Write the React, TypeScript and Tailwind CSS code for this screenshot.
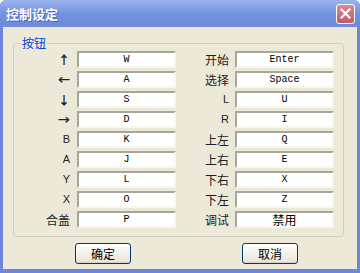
const rows: [string, string, string, string][] = [
  ["↑", "W", "开始", "Enter"],
  ["←", "A", "选择", "Space"],
  ["↓", "S", "L", "U"],
  ["→", "D", "R", "I"],
  ["B", "K", "上左", "Q"],
  ["A", "J", "上右", "E"],
  ["Y", "L", "下右", "X"],
  ["X", "O", "下左", "Z"],
  ["合盖", "P", "调试", "禁用"],
]

const cjk = "font-['SimSun','Noto_Sans_CJK_SC',sans-serif]"
const isCjk = (s: string) => /[\u4e00-\u9fff]/.test(s)
const isArrow = (s: string) => /[\u2190-\u2193]/.test(s)

function KeyBox({ value }: { value: string }) {
  return (
    <div
      className={`flex h-[17px] w-[99px] items-center justify-center border-2 border-t-[#a7a69c] border-l-[#a7a69c] border-r-[#f7f6f1] border-b-[#f7f6f1] bg-white text-black ${
        isCjk(value) ? `${cjk} text-[12px]` : "font-['Liberation_Mono',monospace] text-[10px]"
      }`}
    >
      {value}
    </div>
  )
}

function Label({ text, width }: { text: string; width: string }) {
  let font = `${cjk} text-[12px]`
  if (isArrow(text)) font = "font-['Noto_Sans_CJK_SC',sans-serif] text-[12px] font-bold"
  else if (!isCjk(text)) font = "font-['Liberation_Sans',sans-serif] text-[11px]"
  return (
    <div className={`${width} flex justify-end pr-[1px]`}>
      <span className={`${font} leading-none text-[#222]`}>{text}</span>
    </div>
  )
}

function XpButton({ children }: { children: React.ReactNode }) {
  return (
    <button
      className={`flex h-[21px] w-[56px] items-center justify-center rounded-[3px] border border-[#003c74] bg-gradient-to-b from-white to-[#e6e3d6] ${cjk} text-[12px] text-black shadow-[inset_0_-1px_0_#d6d0c5]`}
    >
      {children}
    </button>
  )
}

export default function App() {
  return (
    <div className="flex h-[273px] w-[360px] flex-col overflow-hidden rounded-t-[6px] bg-[#6d87dc]">
      {/* title bar */}
      <div className="flex h-[27px] items-center justify-between bg-gradient-to-b from-[#9ab3ee] via-[#7393de] to-[#6e8ad9] pl-[6px] pr-[5px]">
        <span
          className={`${cjk} text-[13px] font-bold text-white [text-shadow:1px_1px_0_#4a62b8]`}
        >
          控制设定
        </span>
        <div className="flex h-[20px] w-[19px] items-center justify-center rounded-[3px] border border-white bg-gradient-to-b from-[#d88a95] to-[#c05a6c]">
          <svg width="11" height="11" viewBox="0 0 11 11">
            <path d="M1.5 1.5 L9.5 9.5 M9.5 1.5 L1.5 9.5" stroke="white" strokeWidth="2.2" strokeLinecap="square" />
          </svg>
        </div>
      </div>

      {/* client area */}
      <div className="mx-[3px] mb-[4px] flex flex-1 flex-col bg-[#ece9d8]">
        <div className="relative ml-[10px] mt-[16px] h-[194px] w-[331px] rounded-[4px] border border-[#d0d0bf]">
          <span
            className={`absolute left-[7px] top-[-8px] bg-[#ece9d8] px-[1px] ${cjk} text-[12px] leading-[14px] text-[#0046d5]`}
          >
            按钮
          </span>
          <div className="mt-[7px] flex flex-col gap-[3px]">
            {rows.map(([l1, v1, l2, v2]) => (
              <div key={l1 + l2} className="flex h-[17px] items-center">
                <Label text={l1} width="w-[57px]" />
                <div className="ml-[6px]">
                  <KeyBox value={v1} />
                </div>
                <Label text={l2} width="w-[54px]" />
                <div className="ml-[5px]">
                  <KeyBox value={v2} />
                </div>
              </div>
            ))}
          </div>
        </div>

        <div className="mt-[6px] flex">
          <div className="ml-[72px]">
            <XpButton>确定</XpButton>
          </div>
          <div className="ml-[111px]">
            <XpButton>取消</XpButton>
          </div>
        </div>
      </div>
    </div>
  )
}
